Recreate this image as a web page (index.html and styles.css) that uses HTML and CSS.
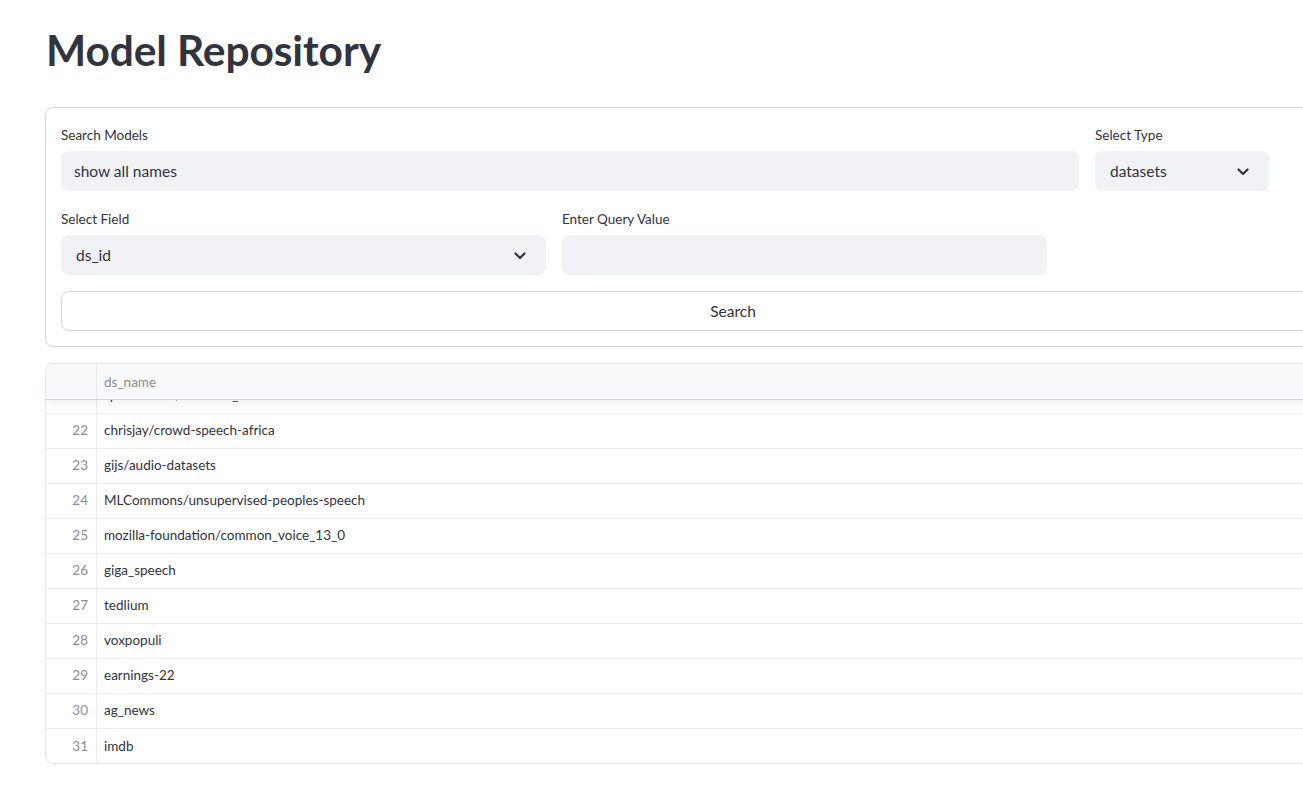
FILE: index.html
```html
<!DOCTYPE html>
<html lang="en">
<head>
<meta charset="utf-8">
<title>Model Repository</title>
<link rel="stylesheet" href="styles.css">
</head>
<body>
<main class="main">
  <h1 class="title">Model Repository</h1>

  <form class="form">
    <div class="row row-top">
      <div class="field">
        <label class="label">Search Models</label>
        <div class="input"><span class="value">show all names</span></div>
      </div>
      <div class="field">
        <label class="label">Select Type</label>
        <div class="input select"><span class="value">datasets</span>
          <svg class="chev" width="12" height="8" viewBox="0 0 12 8"><path d="M1.5 1.5 L6 6 L10.5 1.5" fill="none" stroke="#31333f" stroke-width="2.2" stroke-linecap="round" stroke-linejoin="round"/></svg>
        </div>
      </div>
      <div class="field"></div>
    </div>
    <div class="row row-mid">
      <div class="field">
        <label class="label">Select Field</label>
        <div class="input select"><span class="value">ds_id</span>
          <svg class="chev" width="12" height="8" viewBox="0 0 12 8"><path d="M1.5 1.5 L6 6 L10.5 1.5" fill="none" stroke="#31333f" stroke-width="2.2" stroke-linecap="round" stroke-linejoin="round"/></svg>
        </div>
      </div>
      <div class="field">
        <label class="label">Enter Query Value</label>
        <div class="input"></div>
      </div>
      <div class="field"></div>
    </div>
    <div class="btn-wrap">
      <div class="button">Search</div>
    </div>
  </form>

  <div class="table">
    <div class="thead">
      <div class="cell idx"></div>
      <div class="cell hcell">ds_name</div>
    </div>
    <div class="tbody">
      <div class="rows">
        <div class="tr"><div class="cell idx">21</div><div class="cell">speechbrain/common_voice</div></div>
        <div class="tr"><div class="cell idx">22</div><div class="cell">chrisjay/crowd-speech-africa</div></div>
        <div class="tr"><div class="cell idx">23</div><div class="cell">gijs/audio-datasets</div></div>
        <div class="tr"><div class="cell idx">24</div><div class="cell">MLCommons/unsupervised-peoples-speech</div></div>
        <div class="tr"><div class="cell idx">25</div><div class="cell">mozilla-foundation/common_voice_13_0</div></div>
        <div class="tr"><div class="cell idx">26</div><div class="cell">giga_speech</div></div>
        <div class="tr"><div class="cell idx">27</div><div class="cell">tedlium</div></div>
        <div class="tr"><div class="cell idx">28</div><div class="cell">voxpopuli</div></div>
        <div class="tr"><div class="cell idx">29</div><div class="cell">earnings-22</div></div>
        <div class="tr"><div class="cell idx">30</div><div class="cell">ag_news</div></div>
        <div class="tr"><div class="cell idx">31</div><div class="cell">imdb</div></div>
      </div>
    </div>
  </div>
</main>
</body>
</html>
```

FILE: styles.css
```css
html, body {
  margin: 0;
  padding: 0;
  overflow: hidden;
  background: #ffffff;
}
body {
  font-family: Lato, "Liberation Sans", sans-serif;
  color: #31333f;
  width: 1303px;
  height: 797px;
}
.main {
  padding: 0 0 0 45px;
  width: 1420px;
}
.title {
  margin: 0;
  padding: 24px 0 0 1px;
  height: 107px;
  box-sizing: border-box;
  font-size: 42.5px;
  font-weight: 700;
  line-height: 52px;
  color: #31333f;
  letter-spacing: -0.1px;
}
.form {
  border: 1px solid #d6d6d9;
  border-radius: 8px;
  padding: 15px;
  width: 1344px;
  display: flex;
  flex-direction: column;
  gap: 16px;
}
.row {
  display: grid;
  gap: 16px;
}
.row-top { grid-template-columns: 1018px 174px 1fr; }
.row-mid { grid-template-columns: 485px 485px 1fr; }
.field {
  display: flex;
  flex-direction: column;
}
.label {
  font-size: 13.5px;
  line-height: 24px;
  height: 24px;
  margin-bottom: 4px;
  color: #31333f;
}
.input {
  height: 40px;
  background: #f0f2f6;
  border-radius: 8px;
  display: flex;
  align-items: center;
  padding: 0 13px;
  font-size: 15.5px;
  box-sizing: border-box;
}
.select {
  padding: 0 20px 0 15px;
  justify-content: space-between;
}
.value { color: #31333f; }
.chev { display: block; margin-top: 1px; }
.button {
  height: 40px;
  box-sizing: border-box;
  border: 1px solid #d6d6d9;
  border-radius: 8px;
  display: flex;
  align-items: center;
  justify-content: center;
  font-size: 15.5px;
  color: #31333f;
  width: 1344px;
  background: #fff;
}
.table {
  margin-top: 16px;
  width: 1376px;
  border: 1px solid #e6e7ea;
  border-radius: 8px;
  overflow: hidden;
  font-size: 13.5px;
}
.thead {
  display: flex;
  height: 35px;
  background: #f8f9fb;
  border-bottom: 1px solid #d3d4da;
  position: relative;
  z-index: 2;
  box-shadow: 0 3px 8px rgba(0, 0, 0, 0.06);
}
.cell {
  display: flex;
  align-items: center;
  padding: 0 8px;
  color: #31333f;
  white-space: nowrap;
}
.tr .cell { padding-bottom: 2px; }
.idx {
  width: 51px;
  box-sizing: border-box;
  justify-content: flex-end;
  color: #8b8d95;
  border-right: 1px solid #ebecef;
  flex: none;
}
.hcell { color: #8b8d95; padding-left: 7px; }
.tr .cell:not(.idx) { padding-left: 7px; }
.tbody {
  height: 363px;
  overflow: hidden;
  position: relative;
}
.rows { margin-top: -21px; }
.tr {
  display: flex;
  height: 35px;
  border-bottom: 1px solid #ebecef;
  box-sizing: border-box;
}
.tr:last-child { border-bottom: none; }
```
